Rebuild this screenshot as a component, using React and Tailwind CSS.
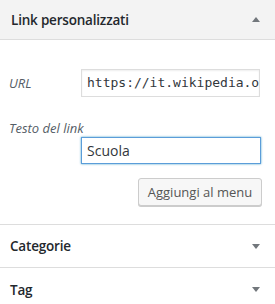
import React from "react";

const Up = () => (
  <svg width="8" height="5" viewBox="0 0 8 5" className="block">
    <path d="M4 0 L8 5 L0 5 Z" fill="#72777c" />
  </svg>
);
const Down = () => (
  <svg width="8" height="5" viewBox="0 0 8 5" className="block">
    <path d="M0 0 L8 0 L4 5 Z" fill="#72777c" />
  </svg>
);

export default function App() {
  return (
    <div
      className="w-[275px] h-[304px] overflow-hidden bg-white text-[#23282d]"
      style={{ fontFamily: '"Open Sans", "Noto Sans", sans-serif' }}
    >
      <div className="h-[40px] bg-[#f3f3f3] border-b border-[#dddddd] flex items-center justify-between pl-[11px] pr-[15px]">
        <span className="text-[13.5px] font-semibold leading-[20px] tracking-[-0.2px]">Link personalizzati</span>
        <Up />
      </div>
      <div className="pt-[29px] pb-[18px] border-b border-[#dddddd]">
        <div className="flex items-center">
          <label className="w-[81px] pl-[9px] text-[13px] italic text-[#555d66] leading-[18px]">URL</label>
          <div className="w-[179px] h-[28px] border border-[#dddddd] shadow-[inset_0_1px_2px_rgba(0,0,0,0.07)] flex items-center pl-[5px] overflow-hidden whitespace-nowrap">
            <span
              className="text-[13px] text-[#32373c]"
              style={{ fontFamily: '"DejaVu Sans Mono", monospace' }}
            >
              https://it.wikipedia.org/wiki/Scuola
            </span>
          </div>
        </div>
        <div className="mt-[22px] pl-[9px] text-[13px] italic text-[#555d66] leading-[18px]">Testo del link</div>
        <div className="flex pl-[81px]">
          <div className="w-[180px] h-[27px] border border-[#5b9dd9] shadow-[0_0_2px_rgba(30,140,190,0.8)] flex items-center pl-[5px] text-[14px] text-[#32373c]">
            Scuola
          </div>
        </div>
        <div className="flex justify-end pr-[13px] mt-[14px]">
          <button className="h-[28px] w-[124px] border border-[#cccccc] bg-[#f7f7f7] rounded-[3px] shadow-[0_1px_0_#cccccc] text-[13px] text-[#555555] leading-[26px]">
            Aggiungi al menu
          </button>
        </div>
      </div>
      <div className="h-[43px] border-b border-[#dddddd] flex items-center justify-between pl-[10px] pr-[15px]">
        <span className="text-[13.5px] font-semibold leading-[20px] tracking-[-0.2px]">Categorie</span>
        <Down />
      </div>
      <div className="h-[43px] flex items-center justify-between pl-[10px] pr-[15px]">
        <span className="text-[13.5px] font-semibold leading-[20px] tracking-[-0.2px]">Tag</span>
        <Down />
      </div>
    </div>
  );
}
